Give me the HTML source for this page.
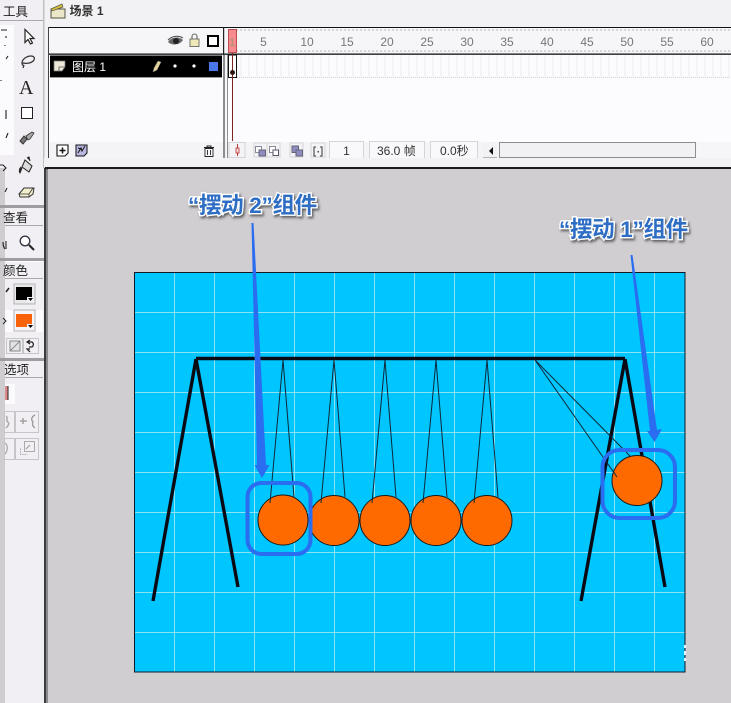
<!DOCTYPE html>
<html><head><meta charset="utf-8">
<style>
html,body{margin:0;padding:0;background:#d0ced1;}
#p{position:relative;width:731px;height:703px;overflow:hidden;background:#d0ced1;font-family:"Liberation Sans","Noto Sans CJK SC",sans-serif;}
svg{position:absolute;left:0;top:0;}
text{font-family:"Liberation Sans","Noto Sans CJK SC",sans-serif;}
</style></head><body><div id="p">
<svg width="731" height="703" viewBox="0 0 731 703" xmlns="http://www.w3.org/2000/svg">
<defs>
<filter id="sh" x="-10%" y="-30%" width="120%" height="170%"><feDropShadow dx="1.5" dy="2" stdDeviation="1.2" flood-color="#444" flood-opacity=".8"/></filter>
<filter id="bl"><feGaussianBlur stdDeviation=".35"/></filter>
</defs>
<!-- top panel -->
<rect x="44" y="0" width="687" height="168" fill="#f2f1f3"/>
<!-- left toolbar -->
<rect x="0" y="0" width="44" height="703" fill="#f1eff3"/>
<rect x="0" y="168" width="5" height="535" fill="#cfcdd0"/>
<rect x="0" y="25" width="14" height="130" fill="#fbfafc"/>
<rect x="0" y="20" width="43" height="1" fill="#a9a8aa"/>
<g filter="url(#bl)">
<text x="3" y="16" font-size="12.5" fill="#222">工具</text>
<!-- arrow -->
<path d="M25 29.500v13l3-3 2.500 4.500 2-1-2.500-4.500h4z" fill="#fff" stroke="#222" stroke-width="1.200"/>
<!-- lasso -->
<path d="M22 63c0-4 5-7 9-7 3 0 4 2 3 4-2 3-7 4-11 3zM23 63c-2 1 0 3 1 2l-1 3" fill="none" stroke="#333" stroke-width="1.200"/>
<text x="19" y="94" font-size="20" fill="#222" style="font-family:'Liberation Serif',serif">A</text>
<rect x="21.500" y="107.500" width="11" height="11" fill="#fff" stroke="#222" stroke-width="1"/>
<!-- brush -->
<path d="M20 141l4-5 3 3-4 5z" fill="#777" stroke="#333"/><path d="M26 136l6-4 2 1-4 6-2 1z" fill="#aaa" stroke="#333" stroke-width=".8"/>
<!-- bucket -->
<path d="M25 160l7 6-3 6-7-5z" fill="#ddd" stroke="#222"/><path d="M21 167c-2 2-2 5-1 6l2-5M27 158l2-1 1 4" fill="#333" stroke="#222"/>
<!-- eraser -->
<path d="M19 194l5-6h10l-1 6-4 3h-9z" fill="#f2eecd" stroke="#333" stroke-width="1"/><path d="M29 194l4-6M19 194h10v3" fill="none" stroke="#333" stroke-width=".8"/>
<!-- left clipped bits -->
<path d="M1 30h6M6 36v2M5 45v1M8 56l-2 3M1 80v1M6 110v9M8 133l-2 5M0 165h3l3 3-3 3M7 188l-2 4" stroke="#222" stroke-width="1.100" fill="none"/>
</g>
<!-- 查看 panel -->
<rect x="0" y="205" width="44" height="3" fill="#9e9ca0"/>
<rect x="5" y="208" width="38" height="18" fill="#f1eff3"/>
<rect x="5" y="225" width="38" height="1" fill="#a9a8aa"/>
<text x="3" y="222" font-size="12.500" fill="#222" filter="url(#bl)">查看</text>
<path d="M6 241v8M3 242c0 3 1 6 2 7" stroke="#222" fill="none" stroke-width="1.100"/>
<circle cx="25" cy="241" r="4.800" fill="#fff" stroke="#334" stroke-width="1.300"/><path d="M29 245l5 5" stroke="#222" stroke-width="2"/>
<rect x="0" y="258" width="44" height="3" fill="#9e9ca0"/>
<rect x="5" y="261" width="38" height="1" fill="#fff"/>
<rect x="5" y="278" width="38" height="1" fill="#a9a8aa"/>
<text x="3" y="275" font-size="12.500" fill="#222" filter="url(#bl)">颜色</text>
<!-- colors -->
<path d="M9 288l-3 4" stroke="#222" stroke-width="1.500"/>
<rect x="14" y="284" width="21" height="20" fill="#e8e7e9" stroke="#b4b3b5"/>
<rect x="16" y="287" width="16" height="13" fill="#000"/><rect x="27" y="297" width="7" height="5" fill="#f4f3f5"/><path d="M28 298h5l-2.500 3z" fill="#000"/>
<rect x="5" y="310" width="38" height="22" fill="#fbfafc"/>
<rect x="14" y="310" width="21" height="21" fill="#f5f4f6" stroke="#b4b3b5"/>
<rect x="16" y="314" width="16" height="13" fill="#f8620a"/><rect x="27" y="324" width="7" height="5" fill="#f4f3f5"/><path d="M28 325h5l-2.500 3z" fill="#000"/>
<path d="M3 318l3 3-3 3" fill="none" stroke="#222"/>
<rect x="6.500" y="338.500" width="16" height="15" fill="none" stroke="#c6c5c7"/>
<rect x="23.500" y="338.500" width="15" height="15" fill="none" stroke="#c6c5c7"/>
<rect x="10" y="341" width="10" height="10" fill="#e3e2e4" stroke="#888"/><path d="M10 351l10-10" stroke="#888"/>
<path d="M28 342h4a3 3 0 0 1 0 5h-3M30 340l-3 2 3 2M30 349l-3 0 3 3" fill="none" stroke="#222" stroke-width="1.200"/>
<rect x="0" y="358" width="44" height="3" fill="#9e9ca0"/>
<rect x="5" y="377" width="38" height="1" fill="#a9a8aa"/>
<text x="4" y="374" font-size="12.500" fill="#222" filter="url(#bl)">选项</text>
<rect x="5" y="384" width="10" height="20" fill="#fbfafc"/>
<rect x="5" y="386" width="3" height="14" fill="#d88"/><path d="M8 386v14" stroke="#222"/>
<rect x="4.500" y="411.500" width="10" height="21" fill="none" stroke="#c6c5c7"/><rect x="15.500" y="411.500" width="23" height="21" fill="none" stroke="#c6c5c7"/>
<rect x="4.500" y="438.500" width="10" height="21" fill="none" stroke="#c6c5c7"/><rect x="15.500" y="438.500" width="23" height="21" fill="none" stroke="#c6c5c7"/>
<path d="M6 416c3 2-1 5 2 6 2 2-1 5-2 6" fill="none" stroke="#aaa" stroke-width="1.500"/>
<path d="M20 421h7M23 418v6M35 415c-4 2-4 5-2 7-1 2-1 4 2 6" fill="none" stroke="#999" stroke-width="1.300"/>
<path d="M5 443c3 2 3 8 0 11" fill="none" stroke="#aaa" stroke-width="1.300"/>
<rect x="24.500" y="441.500" width="10" height="10" fill="none" stroke="#aaa"/><path d="M20.500 448.500v6h7" fill="none" stroke="#aaa" stroke-dasharray="1.500 1"/><path d="M26 449l4-4" stroke="#999"/>
<!-- divider -->
<rect x="43" y="0" width="1.500" height="168" fill="#c0bfc1"/>
<rect x="44" y="168" width="2" height="535" fill="#3c3b3e"/>
<rect x="46" y="168" width="2" height="535" fill="#8a898c"/>
<!-- scene header -->
<g filter="url(#bl)">
<path d="M51 9h14v9h-14z" fill="#ece6c8" stroke="#554"/><path d="M51 9l11-5 1 3-11 4z" fill="#d8bf3d" stroke="#554" stroke-width=".7"/>
<text x="69.500" y="15" font-size="12" font-weight="bold" fill="#333">场景 1</text>
</g>
<!-- timeline frame -->
<rect x="48" y="27" width="683" height="27.500" fill="#f6f5f7"/>
<rect x="48" y="54" width="175" height="88" fill="#fbfafc"/>
<rect x="48" y="142" width="175" height="16" fill="#f4f3f5"/>
<rect x="226" y="54" width="505" height="88" fill="#fcfbfd"/>
<rect x="226" y="142" width="505" height="16" fill="#f4f3f5"/>
<rect x="48" y="27" width="683" height="1" fill="#111"/>
<rect x="48" y="53.500" width="683" height="1.300" fill="#111"/>
<rect x="48" y="27" width="1" height="131" fill="#444"/>
<rect x="223" y="27" width="1.200" height="28" fill="#222"/>
<rect x="223" y="55" width="2" height="103" fill="#8d8c8f"/>
<rect x="227" y="55" width="1" height="103" fill="#8d8c8f"/>
<!-- eye lock box -->
<path d="M168 42c3-5 11-6 15-2-3 5-11 6-15 2z" fill="#666"/><circle cx="176" cy="41" r="3" fill="#222"/><path d="M168 40c4-4 10-5 15-2" fill="none" stroke="#444"/>
<rect x="190" y="39" width="9" height="7.500" fill="#efe8b8" stroke="#555" stroke-width=".8"/><path d="M192 39v-2.500a2.500 2.500 0 0 1 5 0V39" fill="none" stroke="#666" stroke-width="1.100"/>
<rect x="208" y="36" width="10" height="10" fill="#fff" stroke="#000" stroke-width="2"/>
<!-- layer row -->
<rect x="50" y="55.500" width="172" height="22" fill="#000"/>
<rect x="50" y="77" width="172" height="1" fill="#9a999c"/>
<path d="M54 61h11v6l-3 4h-8z" fill="#ece9d8" stroke="#777" stroke-width=".7"/><path d="M59 71v-4h6" fill="none" stroke="#555" stroke-width=".8"/>
<text x="72" y="71" font-size="12" fill="#fff" filter="url(#bl)">图层 1</text>
<path d="M153 72l1-4 4-7 3 1-4 8z" fill="#e5d79a" stroke="#777" stroke-width=".5"/>
<circle cx="175" cy="66" r="1.600" fill="#fff"/><circle cx="194" cy="66" r="1.600" fill="#fff"/>
<rect x="209" y="62" width="9" height="9" fill="#4a78e8"/>
<!-- bottom left icons -->
<path d="M57 145h11v8l-3 3h-8z" fill="#fff" stroke="#111" stroke-width="1.100"/><path d="M62.500 147.500v6M59.500 150.500h6" stroke="#111" stroke-width="1.500"/>
<path d="M76 145h11v8l-3 3h-8z" fill="#b9b8e2" stroke="#111" stroke-width="1"/><path d="M78 153l3-5 1 3 3-5M78 148l3 1" stroke="#111" fill="none"/>
<path d="M204 147.500h10M207 147.500v-1.500h4v1.500" stroke="#222" fill="none"/><path d="M205 148.500h8v8h-8zM207.500 150v5M210.500 150v5" fill="#f8f8f8" stroke="#222" stroke-width=".9"/>
<!-- ruler -->
<g stroke="#9c9b9e" stroke-width=".7" id="t1">
<path d="M233 29v2M237 29v2M241 29v2M245 29v2M249 29v2M253 29v2M257 29v2M261 29v2M265 29v2M269 29v2M273 29v2M277 29v2M281 29v2M285 29v2M289 29v2M293 29v2M297 29v2M301 29v2M305 29v2M309 29v2M313 29v2M317 29v2M321 29v2M325 29v2M329 29v2M333 29v2M337 29v2M341 29v2M345 29v2M349 29v2M353 29v2M357 29v2M361 29v2M365 29v2M369 29v2M373 29v2M377 29v2M381 29v2M385 29v2M389 29v2M393 29v2M397 29v2M401 29v2M405 29v2M409 29v2M413 29v2M417 29v2M421 29v2M425 29v2M429 29v2M433 29v2M437 29v2M441 29v2M445 29v2M449 29v2M453 29v2M457 29v2M461 29v2M465 29v2M469 29v2M473 29v2M477 29v2M481 29v2M485 29v2M489 29v2M493 29v2M497 29v2M501 29v2M505 29v2M509 29v2M513 29v2M517 29v2M521 29v2M525 29v2M529 29v2M533 29v2M537 29v2M541 29v2M545 29v2M549 29v2M553 29v2M557 29v2M561 29v2M565 29v2M569 29v2M573 29v2M577 29v2M581 29v2M585 29v2M589 29v2M593 29v2M597 29v2M601 29v2M605 29v2M609 29v2M613 29v2M617 29v2M621 29v2M625 29v2M629 29v2M633 29v2M637 29v2M641 29v2M645 29v2M649 29v2M653 29v2M657 29v2M661 29v2M665 29v2M669 29v2M673 29v2M677 29v2M681 29v2M685 29v2M689 29v2M693 29v2M697 29v2M701 29v2M705 29v2M709 29v2M713 29v2M717 29v2M721 29v2M725 29v2M729 29v2"/>
</g>
<use href="#t1" y="21"/>
<!-- frame cell lines -->
<g stroke="#ecebef" stroke-width="1">
<path d="M241 55v23M249 55v23M257 55v23M265 55v23M273 55v23M281 55v23M289 55v23M297 55v23M305 55v23M313 55v23M321 55v23M329 55v23M337 55v23M345 55v23M353 55v23M361 55v23M369 55v23M377 55v23M385 55v23M393 55v23M401 55v23M409 55v23M417 55v23M425 55v23M433 55v23M441 55v23M449 55v23M457 55v23M465 55v23M473 55v23M481 55v23M489 55v23M497 55v23M505 55v23M513 55v23M521 55v23M529 55v23M537 55v23M545 55v23M553 55v23M561 55v23M569 55v23M577 55v23M585 55v23M593 55v23M601 55v23M609 55v23M617 55v23M625 55v23M633 55v23M641 55v23M649 55v23M657 55v23M665 55v23M673 55v23M681 55v23M689 55v23M697 55v23M705 55v23M713 55v23M721 55v23M729 55v23"/>
<path d="M237 77.500h494" stroke-dasharray="1 1" stroke="#d0cfd2"/>
</g>
<g font-size="12" fill="#77767a" text-anchor="middle" filter="url(#bl)">
<text x="263.500" y="46">5</text><text x="307" y="46">10</text><text x="347" y="46">15</text><text x="387" y="46">20</text><text x="427" y="46">25</text><text x="467" y="46">30</text><text x="507" y="46">35</text><text x="547" y="46">40</text><text x="587" y="46">45</text><text x="627" y="46">50</text><text x="667" y="46">55</text><text x="707" y="46">60</text>
</g>
<!-- playhead -->
<rect x="228.500" y="29.500" width="8" height="23" fill="#f78a8e" stroke="#a33" stroke-width=".8"/>
<text x="232" y="46" font-size="11" fill="#996" text-anchor="middle">1</text>
<rect x="228.500" y="55" width="8" height="22.500" fill="#fff" stroke="#111" stroke-width="1"/>
<rect x="232" y="53" width="1" height="88" fill="#7c2420"/>
<circle cx="232.500" cy="72.500" r="2.500" fill="#2a1512"/>
<!-- bottom bar -->
<rect x="229" y="142.500" width="16" height="15" fill="none" stroke="#d5d4d7"/>
<path d="M237.500 144v12" stroke="#b33"/><rect x="236" y="148" width="3" height="5" fill="#f4d4d4" stroke="#b33" stroke-width=".8"/>
<rect x="254" y="143" width="13" height="14" fill="none" stroke="#d5d4d7"/><rect x="267" y="143" width="13" height="14" fill="none" stroke="#d5d4d7"/><rect x="290" y="143" width="13" height="14" fill="none" stroke="#d5d4d7"/><rect x="311" y="143" width="14" height="14" fill="none" stroke="#d5d4d7"/>
<rect x="255.500" y="146.500" width="6" height="6" fill="#fff" stroke="#889"/><rect x="259" y="150" width="6.500" height="6" fill="#8d8bc0" stroke="#667"/>
<rect x="269.500" y="146.500" width="6" height="6" fill="#fff" stroke="#889"/><rect x="273" y="150" width="5.500" height="5.500" fill="#fff" stroke="#556"/>
<rect x="292" y="146" width="6.500" height="6.500" fill="#8d8bc0" stroke="#667"/><rect x="296" y="150" width="6.500" height="6" fill="#8d8bc0" stroke="#667"/>
<path d="M316 147h-2v9h2M320 147h2v9h-2" fill="none" stroke="#444" stroke-width="1.100"/><rect x="317.500" y="151" width="1.500" height="1.500" fill="#444"/>
<rect x="329.500" y="141.500" width="34" height="17" fill="#f9f8fa" stroke="#d5d4d7"/>
<rect x="369.500" y="141.500" width="55" height="17" fill="#f9f8fa" stroke="#d5d4d7"/>
<rect x="430.500" y="141.500" width="47" height="17" fill="#f9f8fa" stroke="#d5d4d7"/>
<g font-size="12" fill="#333" filter="url(#bl)">
<text x="346.500" y="155" text-anchor="middle">1</text>
<text x="377" y="155">36.0 帧</text>
<text x="440" y="155">0.0秒</text>
</g>
<!-- scrollbar -->
<rect x="483" y="142" width="14" height="16" fill="#f2f1f3"/>
<path d="M493 147v8l-4-4z" fill="#111"/>
<rect x="483" y="157.500" width="14" height="1" fill="#777"/>
<rect x="499.500" y="142.500" width="196" height="15" fill="#f1f0f2" stroke="#8e8d90"/>
<rect x="697" y="142" width="34" height="16" fill="#f6f5f7"/>
<!-- band -->
<rect x="44" y="158" width="687" height="9" fill="#f2f1f3"/>
<rect x="45" y="167" width="686" height="2.200" fill="#1a1a1a"/>
<rect x="48" y="169" width="683" height="534" fill="#d0ced1"/>
<!-- stage -->
<rect x="135" y="272.500" width="550" height="399.500" fill="#00c6ff"/>
<g stroke="#8ae2f5" stroke-width="1">
<path d="M174.500 273v399M214.500 273v399M254.500 273v399M294.500 273v399M334.500 273v399M374.500 273v399M414.500 273v399M454.500 273v399M494.500 273v399M534.500 273v399M574.500 273v399M614.500 273v399M654.500 273v399"/>
<path d="M135 312.500h550M135 352.500h550M135 392.500h550M135 432.500h550M135 472.500h550M135 512.500h550M135 552.500h550M135 592.500h550M135 632.500h550"/>
</g>
<rect x="134.500" y="272.500" width="550.500" height="399.500" fill="none" stroke="#10192a" stroke-width="1"/>
<!-- frame -->
<g stroke="#0a0a14" stroke-width="3.400" fill="none" stroke-linecap="butt">
<path d="M196 358.500H625"/>
<path d="M196 359L153 601"/>
<path d="M196 359L238 587"/>
<path d="M625 359L581 601"/>
<path d="M625 359L665 587"/>
</g>
<!-- balls -->
<g fill="#fe6a00" stroke="#1a1a1a" stroke-width="1">
<circle cx="283" cy="520" r="25"/><circle cx="334" cy="520.500" r="25"/><circle cx="385" cy="520.500" r="25"/><circle cx="436" cy="520.500" r="25"/><circle cx="487" cy="520.500" r="25"/>
<circle cx="637" cy="480.500" r="25"/>
</g>
<!-- strings -->
<g stroke="#0d2738" stroke-width="1" fill="none">
<path d="M283 360L270 503M283 360L294 497"/>
<path d="M334 360L321 503M334 360L345 497"/>
<path d="M385 360L372 503M385 360L396 497"/>
<path d="M436 360L423 503M436 360L447 497"/>
<path d="M487 360L474 503M487 360L498 497"/>
<path d="M535 360L617 477M535 360L630 456"/>
</g>
<!-- annotations -->
<g fill="#2a6df0">
<path d="M251.500 223L253.500 223L266 465L269.500 465L262 478L254.500 465L257 465z"/>
<path d="M630.500 255L632.500 255L657 430L662 429L654.500 442L647 431L650 431z"/>
</g>
<g fill="none" stroke="#2a6df0" stroke-width="4">
<rect x="247.500" y="483" width="63" height="71" rx="14"/>
<rect x="602.500" y="450" width="72.500" height="68" rx="17"/>
</g>
<!-- bits at bottom right -->
<path d="M685 645v3M685 651v4M685 658v3" stroke="#e8f4fa" stroke-width="2"/>
<g font-size="22.500" font-weight="bold" filter="url(#sh)">
<text x="188" y="213" fill="#2e6dc4" stroke="#fff" stroke-width="2.800" paint-order="stroke" letter-spacing="-.3">“摆动 2”组件</text>
<text x="559" y="237" fill="#2e6dc4" stroke="#fff" stroke-width="2.800" paint-order="stroke" letter-spacing="-.3">“摆动 1”组件</text>
</g>
</svg>
</div></body></html>
